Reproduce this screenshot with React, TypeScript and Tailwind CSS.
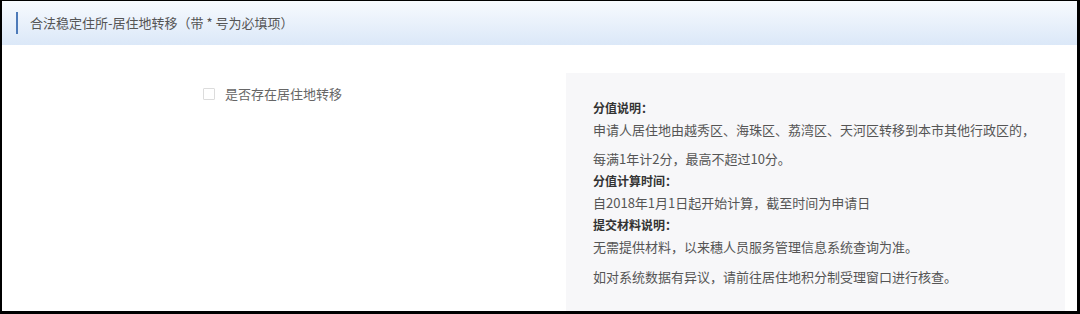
const font = "font-['Microsoft_YaHei','Noto_Sans_CJK_SC',sans-serif]";

export default function App() {
  return (
    <div className={`w-[1080px] h-[314px] bg-white border-l-2 border-r-[3px] border-t border-b-[3px] border-black flex flex-col overflow-hidden ${font}`}>
      {/* header */}
      <div className="h-[44px] shrink-0 flex items-center bg-gradient-to-b from-[#f7fafe] to-[#dbe8f8] pl-[14px]">
        <span className="w-[2px] h-[22px] bg-[#4d7ab9] mr-3" />
        <span className="text-[13px] text-[#555]">合法稳定住所-居住地转移（带 * 号为必填项）</span>
      </div>

      {/* body */}
      <div className="flex flex-1">
        <div className="w-[564px] shrink-0 pl-[201px] pt-[39px]">
          <label className="flex items-center gap-[10px] text-[13px] text-[#666]">
            <span className="w-[12px] h-[12px] border border-[#dcdcdc] bg-white rounded-[1px]" />
            是否存在居住地转移
          </label>
        </div>

        <div className="w-[499px] mt-[28px] bg-[#f7f7f9] pl-[27px] pt-[24px] text-[13px] text-[#555] leading-[22px]">
          <div className="text-[12px] font-bold text-[#333]">分值说明：</div>
          <div>申请人居住地由越秀区、海珠区、荔湾区、天河区转移到本市其他行政区的，</div>
          <div className="mt-[7px]">每满1年计2分，最高不超过10分。</div>
          <div className="text-[12px] font-bold text-[#333]">分值计算时间：</div>
          <div>自2018年1月1日起开始计算，截至时间为申请日</div>
          <div className="text-[12px] font-bold text-[#333]">提交材料说明：</div>
          <div>无需提供材料，以来穗人员服务管理信息系统查询为准。</div>
          <div className="mt-[8px]">如对系统数据有异议，请前往居住地积分制受理窗口进行核查。</div>
        </div>
      </div>
    </div>
  );
}
